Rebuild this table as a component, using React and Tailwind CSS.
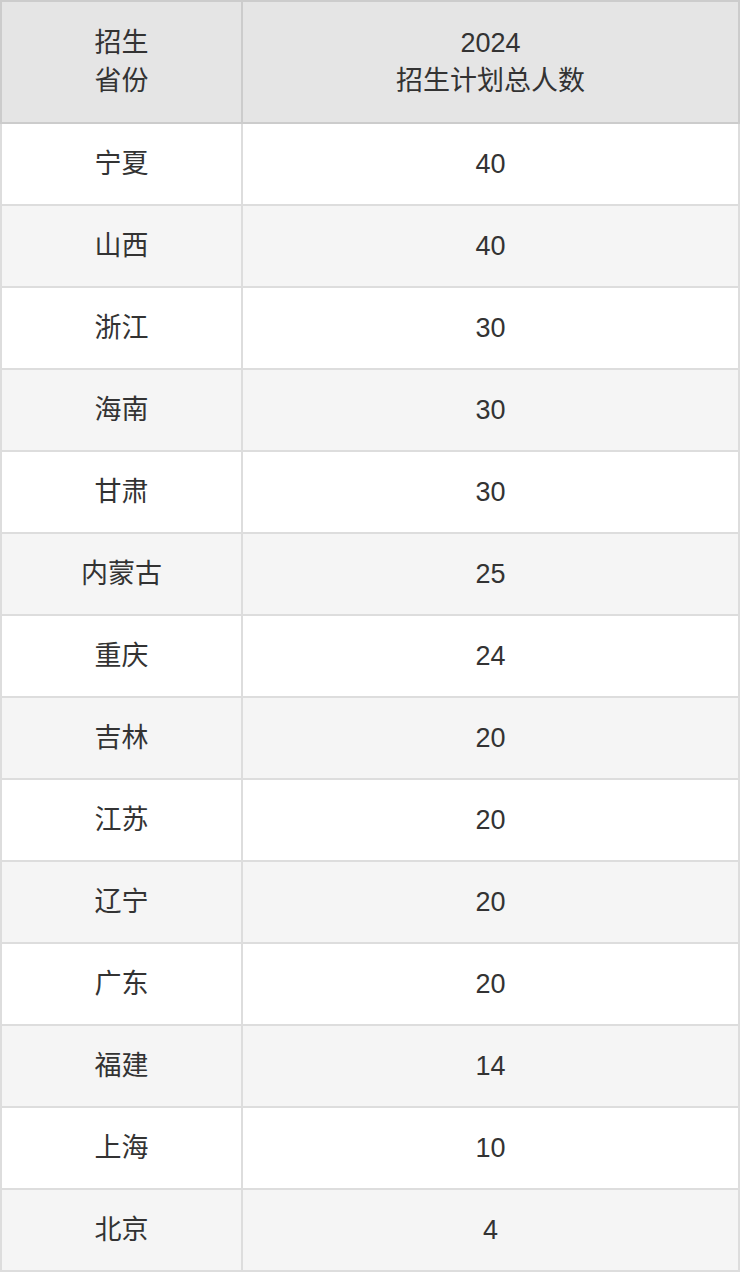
const rows = [
  ["宁夏", "40"],
  ["山西", "40"],
  ["浙江", "30"],
  ["海南", "30"],
  ["甘肃", "30"],
  ["内蒙古", "25"],
  ["重庆", "24"],
  ["吉林", "20"],
  ["江苏", "20"],
  ["辽宁", "20"],
  ["广东", "20"],
  ["福建", "14"],
  ["上海", "10"],
  ["北京", "4"],
];

export default function App() {
  return (
    <div className="w-[740px] bg-white font-['Liberation_Sans','Noto_Sans_CJK_SC',sans-serif] text-[#333] text-[27px]">
      <table className="w-full border-collapse table-fixed">
        <colgroup>
          <col className="w-[241px]" />
          <col />
        </colgroup>
        <thead>
          <tr className="bg-[#e5e5e5] h-[122px]">
            <th className="border-2 border-[#ccc] font-normal leading-[38px] text-center align-middle">
              招生
              <br />
              省份
            </th>
            <th className="border-2 border-[#ccc] font-normal leading-[38px] text-center align-middle">
              2024
              <br />
              招生计划总人数
            </th>
          </tr>
        </thead>
        <tbody>
          {rows.map(([prov, num], i) => (
            <tr key={prov} className={`h-[82px] ${i % 2 === 0 ? "bg-white" : "bg-[#f5f5f5]"}`}>
              <td className="border-2 border-[#ddd] text-center align-middle">{prov}</td>
              <td className="border-2 border-[#ddd] text-center align-middle">{num}</td>
            </tr>
          ))}
        </tbody>
      </table>
    </div>
  );
}
